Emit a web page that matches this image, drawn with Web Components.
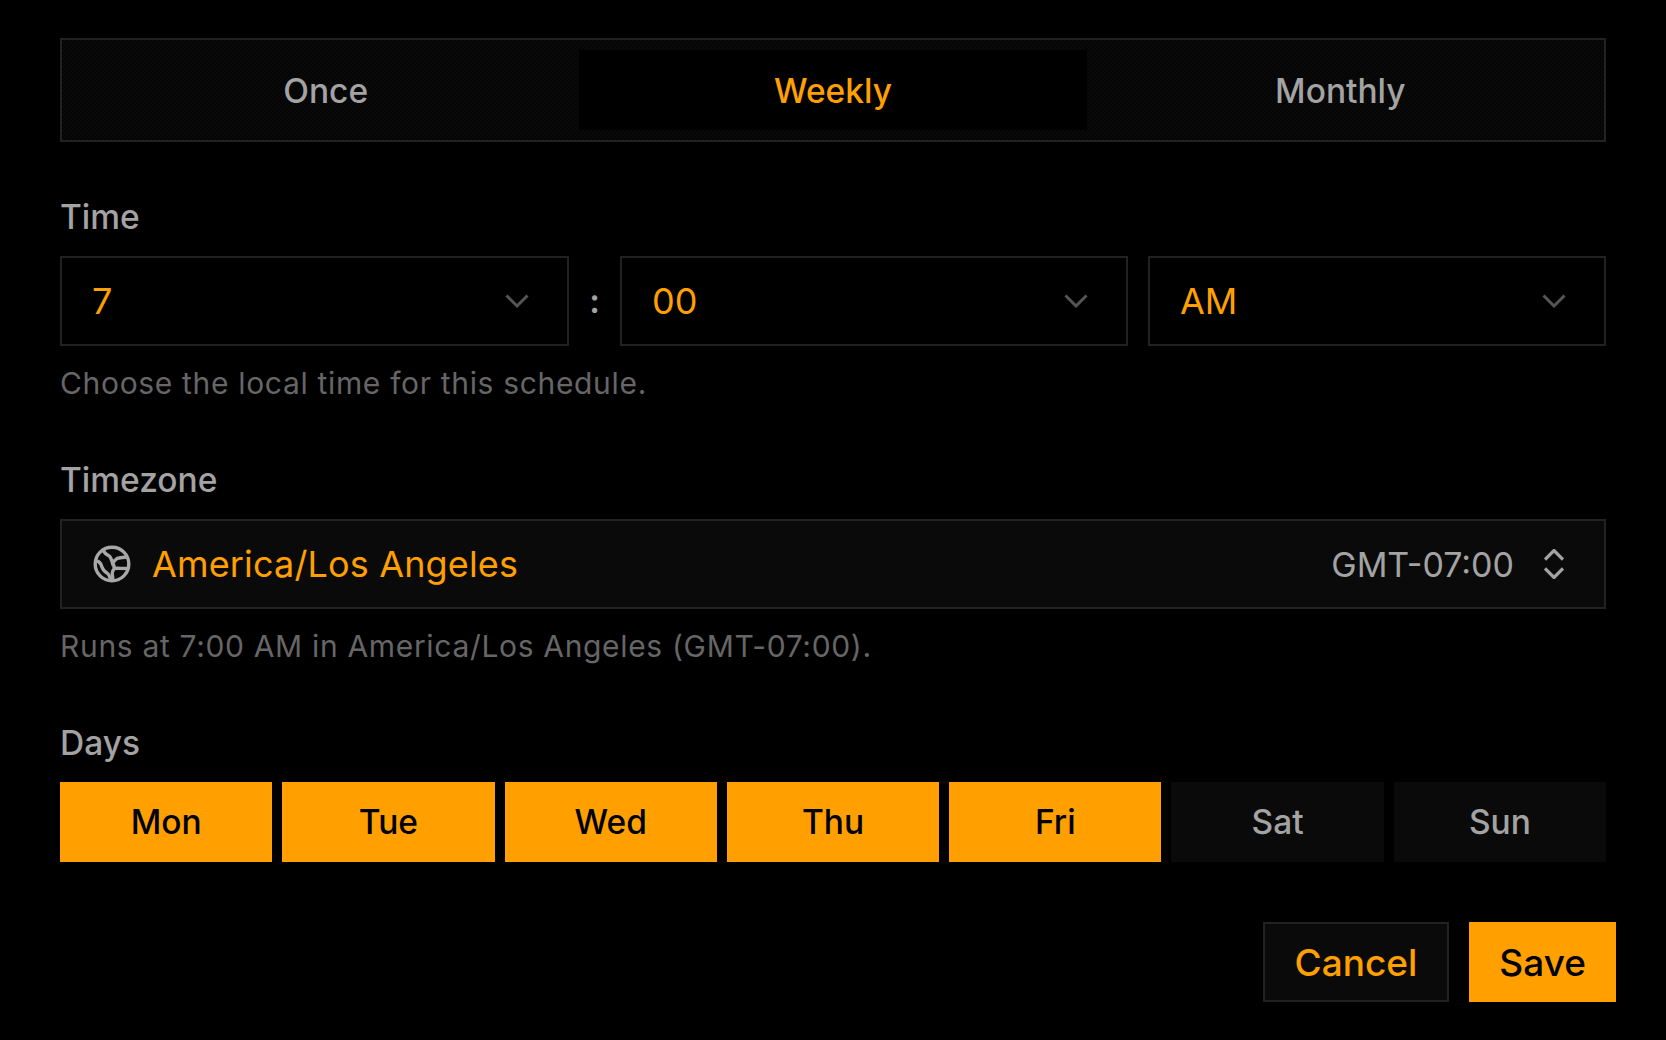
<!DOCTYPE html>
<html>
<head>
<meta charset="utf-8">
<title>Schedule</title>
<style>
    html, body {
        margin: 0;
        height: 100%;
        background: #000;
    }
    body {
        font-family: Inter, 'Liberation Sans', sans-serif;
        font-size: 33.5px;
    }
</style>
</head>
<body>
<template id="tabs-template">
    <style>
        :host {
            display: grid;
            grid-template-columns: repeat(3, 1fr);
            padding: 10px;
            background: repeating-conic-gradient(#090909 0 25%, #050505 0 50%) 0 0 / 4px 4px;
            border: 2px solid #222;
        }
    </style>
    <slot></slot>
</template>

<template id="tab-template">
    <style>
        :host {
            display: flex;
            align-items: center;
            justify-content: center;
            box-sizing: border-box;
            height: 80px;
            padding-top: 2px;
            color: #a3a3a3;
            font-weight: 500;
        }
        :host([active]) {
            background: #000;
            color: #ffa000;
        }
    </style>
    <slot></slot>
</template>

<template id="field-template">
    <style>
        :host {
            display: block;
            margin-bottom: 58px;
        }
        .label {
            height: 38px;
            margin-bottom: 20px;
            line-height: 38px;
            color: #a3a3a3;
            font-weight: 500;
        }
        .help {
            margin-top: 17px;
            height: 40px;
            line-height: 40px;
            color: #666;
            font-size: 30px;
            letter-spacing: .67px;
        }
        .help:empty { display: none; }
    </style>
    <div class="label"></div>
    <slot></slot>
    <div class="help"></div>
</template>

<template id="select-template">
    <style>
        :host {
            display: flex;
            align-items: center;
            justify-content: space-between;
            box-sizing: border-box;
            height: 90px;
            padding: 0 38px 0 30px;
            border: 2px solid #222;
            color: #ffa000;
            font-size: 36px;
        }
        svg {
            width: 24px;
            height: 14px;
            fill: none;
            stroke: #555;
            stroke-width: 3;
        }
    </style>
    <slot></slot>
    <svg viewBox="0 0 24 14"><path d="M1.500 1.500 12 12 22.500 1.500"/></svg>
</template>

<template id="combo-template">
    <style>
        :host {
            display: flex;
            align-items: center;
            box-sizing: border-box;
            height: 90px;
            padding: 0 40px 0 26px;
            background: #0a0a0a;
            border: 2px solid #222;
            color: #ffa000;
            font-size: 36px;
        }
        .globe {
            width: 48px;
            height: 48px;
            margin-right: 16px;
            fill: none;
            stroke: #a8a8a8;
            stroke-width: 3.400;
        }
        .name { flex: 1; letter-spacing: .15px; }
        .offset {
            color: #a3a3a3;
            font-size: 34px;
            margin-right: 30px;
        }
        .updown {
            width: 20px;
            height: 30px;
            fill: none;
            stroke: #a3a3a3;
            stroke-width: 3.200;
        }
    </style>
    <svg class="globe" viewBox="0 0 48 48">
        <circle cx="24" cy="24" r="16.800"/>
        <path d="M15 10c1.500 3 3 4.500 5.500 5.500 2.500 1 3 4.500 4 7.500 2-2.500 4-5 6.500-5 2.500-.5 5-.5 7-1"/>
        <path d="M24.500 23c1.500 2 2 4 1.500 5.500-1.500 2.500-2.500 4.500-1.500 7.500l.5 4.500"/>
        <path d="M26 28.500c3-.5 5 0 15 0"/>
        <path d="M7 20.500c3 .5 5 1.500 6 4 1 3.500 2.500 6.500 6 8.500 2 1.500 3 3 3.500 7.500"/>
    </svg>
    <span class="name"><slot></slot></span>
    <span class="offset"><slot name="offset"></slot></span>
    <svg class="updown" viewBox="0 0 20 30"><path d="M1 10.500 10 1.500l9 9M1 19.500 10 28.500l9-9"/></svg>
</template>

<template id="day-template">
    <style>
        :host {
            display: flex;
            align-items: center;
            justify-content: center;
            height: 80px;
            background: #0a0a0a;
            color: #a3a3a3;
            font-weight: 500;
        }
        :host([on]) {
            background: #ffa000;
            color: #000;
        }
    </style>
    <slot></slot>
</template>

<template id="button-template">
    <style>
        :host {
            display: flex;
            align-items: center;
            box-sizing: border-box;
            height: 80px;
            padding: 0 30px;
            background: #0a0a0a;
            border: 2px solid #222;
            color: #ffa000;
            font-weight: 500;
            font-size: 37px;
        }
        :host([primary]) {
            padding: 0 28px;
            background: #ffa000;
            border-color: #ffa000;
            color: #000;
        }
    </style>
    <slot></slot>
</template>

<template id="form-template">
    <style>
        :host {
            display: block;
            box-sizing: border-box;
            width: 1666px;
            padding: 38px 60px 0;
        }
        .time-row {
            display: grid;
            grid-template-columns: 509px 11px 1fr 458px;
            gap: 20px;
            align-items: center;
        }
        .colon {
            color: #a3a3a3;
            font-weight: 600;
            text-align: center;
        }
        .days {
            display: grid;
            grid-template-columns: repeat(7, 1fr);
            gap: 10px;
        }
        .first { margin-top: 56px; }
        .actions {
            display: flex;
            justify-content: flex-end;
            gap: 20px;
            margin: 60px -10px 0 0;
        }
    </style>
    <schedule-tabs>
        <schedule-tab>Once</schedule-tab>
        <schedule-tab active>Weekly</schedule-tab>
        <schedule-tab>Monthly</schedule-tab>
    </schedule-tabs>

    <form-field class="first" label="Time" help="Choose the local time for this schedule.">
        <div class="time-row">
            <time-select>7</time-select>
            <span class="colon">:</span>
            <time-select>00</time-select>
            <time-select>AM</time-select>
        </div>
    </form-field>

    <form-field label="Timezone" help="Runs at 7:00 AM in America/Los Angeles (GMT-07:00).">
        <timezone-combo>America/Los Angeles<span slot="offset">GMT-07:00</span></timezone-combo>
    </form-field>

    <form-field label="Days">
        <div class="days">
            <day-toggle on>Mon</day-toggle>
            <day-toggle on>Tue</day-toggle>
            <day-toggle on>Wed</day-toggle>
            <day-toggle on>Thu</day-toggle>
            <day-toggle on>Fri</day-toggle>
            <day-toggle>Sat</day-toggle>
            <day-toggle>Sun</day-toggle>
        </div>
    </form-field>

    <div class="actions">
        <form-button>Cancel</form-button>
        <form-button primary>Save</form-button>
    </div>
</template>

<schedule-form></schedule-form>

<script>
    // plain elements: stamp the template with the same id into an open shadow root
    function stamped(id) {
        return class extends HTMLElement {
            connectedCallback() {
                if (this.shadowRoot) return;
                this.root = this.attachShadow({ mode: 'open' });
                this.root.appendChild(document.getElementById(id).content.cloneNode(true));
            }
        };
    }

    class FormField extends HTMLElement {
        connectedCallback() {
            if (this.shadowRoot) return;
            this.root = this.attachShadow({ mode: 'open' });
            this.root.appendChild(document.getElementById('field-template').content.cloneNode(true));
            this.root.querySelector('.label').textContent = this.getAttribute('label');
            this.root.querySelector('.help').textContent = this.getAttribute('help') || '';
        }
    }

    customElements.define('schedule-tabs', stamped('tabs-template'));
    customElements.define('schedule-tab', stamped('tab-template'));
    customElements.define('form-field', FormField);
    customElements.define('time-select', stamped('select-template'));
    customElements.define('timezone-combo', stamped('combo-template'));
    customElements.define('day-toggle', stamped('day-template'));
    customElements.define('form-button', stamped('button-template'));
    customElements.define('schedule-form', stamped('form-template'));
</script>
</body>
</html>
